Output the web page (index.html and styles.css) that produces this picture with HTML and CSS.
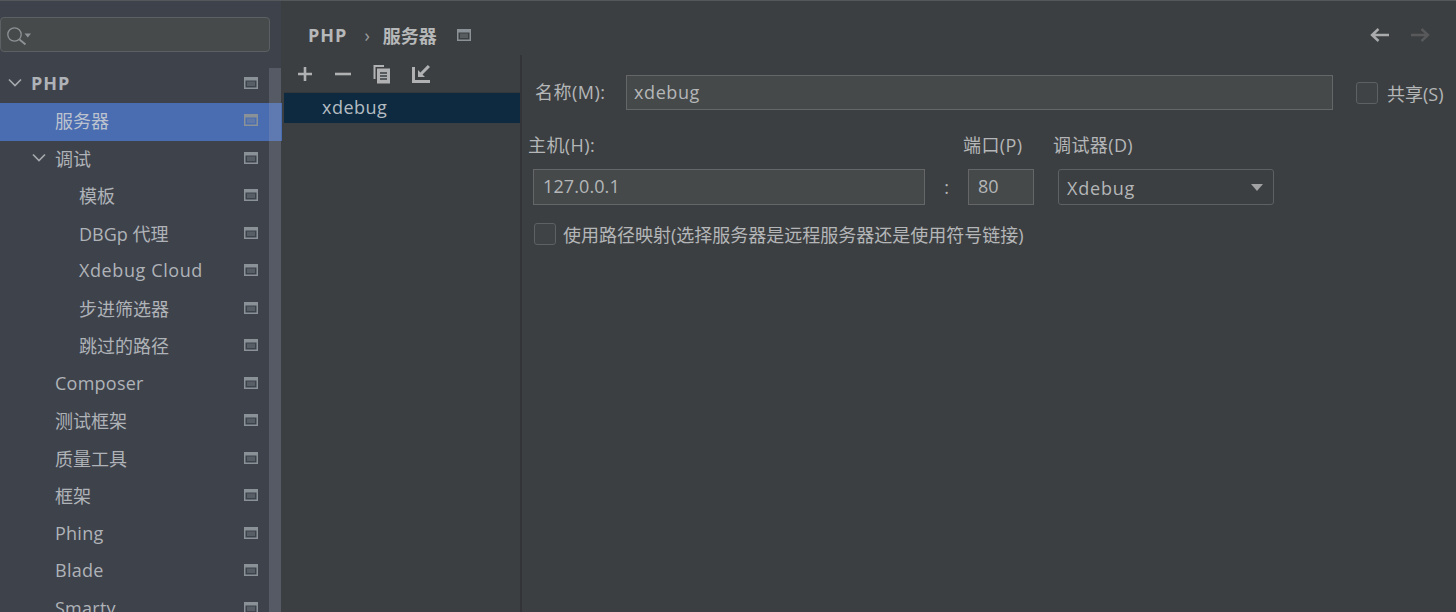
FILE: index.html
```html
<!DOCTYPE html>
<html lang="zh-CN">
<head>
    <meta charset="UTF-8">
    <title>PHP - 服务器</title>
    <link rel="stylesheet" href="styles.css">
</head>
<body>
    <svg class="defs" width="0" height="0">
        <symbol id="proj" viewBox="0 0 14 14">
            <rect x="0.75" y="1.75" width="12.5" height="10.5" fill="none" stroke="#8a9298" stroke-width="1.5"/>
            <rect x="1" y="2" width="12" height="2.5" fill="#8a9298"/>
            <rect x="3" y="5.5" width="8" height="4.5" fill="#8a9298" opacity="0.35"/>
        </symbol>
        <symbol id="chev" viewBox="0 0 15 14">
            <path d="M2 3.5 L8 9.5 L14 3.5" fill="none" stroke="#a4a8ac" stroke-width="1.7"/>
        </symbol>
    </svg>

    <div class="app">
        <!-- left tree -->
        <aside class="sidebar">
            <div class="search">
                <svg class="search-icon" width="32" height="24" viewBox="0 0 32 24">
                    <circle cx="13.5" cy="10.5" r="6.7" fill="none" stroke="#8f9295" stroke-width="1.3"/>
                    <path d="M18.5 15.5 L24.5 20.5" stroke="#8f9295" stroke-width="1.8"/>
                    <path d="M23.5 9.5 H30 L26.75 13.5 Z" fill="#8f9295"/>
                </svg>
            </div>
            <ul class="tree">
                <li class="row lvl0 root"><span class="tog"><svg width="15" height="14"><use href="#chev"/></svg></span><span class="name">PHP</span><svg class="pi" width="14" height="14"><use href="#proj"/></svg></li>
                <li class="row lvl1 selected"><span class="tog"></span><span class="name">服务器</span><svg class="pi" width="14" height="14"><use href="#proj"/></svg></li>
                <li class="row lvl1"><span class="tog"><svg width="15" height="14"><use href="#chev"/></svg></span><span class="name">调试</span><svg class="pi" width="14" height="14"><use href="#proj"/></svg></li>
                <li class="row lvl2"><span class="tog"></span><span class="name">模板</span><svg class="pi" width="14" height="14"><use href="#proj"/></svg></li>
                <li class="row lvl2"><span class="tog"></span><span class="name">DBGp 代理</span><svg class="pi" width="14" height="14"><use href="#proj"/></svg></li>
                <li class="row lvl2"><span class="tog"></span><span class="name wide">Xdebug Cloud</span><svg class="pi" width="14" height="14"><use href="#proj"/></svg></li>
                <li class="row lvl2"><span class="tog"></span><span class="name">步进筛选器</span><svg class="pi" width="14" height="14"><use href="#proj"/></svg></li>
                <li class="row lvl2"><span class="tog"></span><span class="name">跳过的路径</span><svg class="pi" width="14" height="14"><use href="#proj"/></svg></li>
                <li class="row lvl1"><span class="tog"></span><span class="name slim">Composer</span><svg class="pi" width="14" height="14"><use href="#proj"/></svg></li>
                <li class="row lvl1"><span class="tog"></span><span class="name">测试框架</span><svg class="pi" width="14" height="14"><use href="#proj"/></svg></li>
                <li class="row lvl1"><span class="tog"></span><span class="name">质量工具</span><svg class="pi" width="14" height="14"><use href="#proj"/></svg></li>
                <li class="row lvl1"><span class="tog"></span><span class="name">框架</span><svg class="pi" width="14" height="14"><use href="#proj"/></svg></li>
                <li class="row lvl1"><span class="tog"></span><span class="name slim">Phing</span><svg class="pi" width="14" height="14"><use href="#proj"/></svg></li>
                <li class="row lvl1"><span class="tog"></span><span class="name slim">Blade</span><svg class="pi" width="14" height="14"><use href="#proj"/></svg></li>
                <li class="row lvl1"><span class="tog"></span><span class="name slim">Smarty</span><svg class="pi" width="14" height="14"><use href="#proj"/></svg></li>
            </ul>
            <div class="scrollbar"></div>
        </aside>

        <main class="main">
            <header class="crumbs">
                <span class="crumb crumb-en">PHP</span>
                <span class="sep">›</span>
                <span class="crumb">服务器</span>
                <svg class="crumb-pi" width="14" height="14"><use href="#proj"/></svg>
                <span class="nav">
                    <svg width="22" height="16" viewBox="0 0 22 16"><path d="M20 8 H3 M9.5 2 L3 8 L9.5 14" fill="none" stroke="#a9abad" stroke-width="2.4"/></svg>
                    <svg width="22" height="16" viewBox="0 0 22 16"><path d="M2 8 H19 M12.5 2 L19 8 L12.5 14" fill="none" stroke="#58595b" stroke-width="2.4"/></svg>
                </span>
            </header>

            <div class="content">
                <section class="servers">
                    <div class="toolbar">
                        <svg width="18" height="18" viewBox="0 0 18 18"><path d="M9 2 V16 M2 9 H16" stroke="#afb1b3" stroke-width="2.6"/></svg>
                        <svg width="18" height="18" viewBox="0 0 18 18"><path d="M1 9 H17" stroke="#afb1b3" stroke-width="2.6"/></svg>
                        <svg width="20" height="20" viewBox="0 0 20 20"><path d="M1.5 1 H12 V3 H3.5 V15 H1.5 Z" fill="#afb1b3"/><rect x="5" y="4.5" width="13" height="15" fill="#afb1b3"/><path d="M8 9 H15 M8 12 H15 M8 15 H15" stroke="#3c3f41" stroke-width="1.4"/></svg>
                        <svg class="import" width="20" height="20" viewBox="0 0 20 20"><path d="M1 3 H4 V16 H19 V19 H1 Z" fill="#afb1b3"/><path d="M7 6 V13 H14 L11.5 10.6 L19 3 L16.8 1 L9.4 8.4 Z" fill="#afb1b3"/></svg>
                    </div>
                    <div class="server-item">xdebug</div>
                </section>

                <section class="form">
                    <div class="name-row">
                        <label class="name-label">名称(M):</label>
                        <div class="field name-field">xdebug</div>
                        <span class="check share-check"></span>
                        <span class="share-label">共享(S)</span>
                    </div>
                    <div class="head-row">
                        <span class="h-host">主机(H):</span>
                        <span class="h-port">端口(P)</span>
                        <span class="h-debug">调试器(D)</span>
                    </div>
                    <div class="value-row">
                        <div class="field host-field">127.0.0.1</div>
                        <span class="colon">:</span>
                        <div class="field port-field">80</div>
                        <div class="select">Xdebug<span class="caret"></span></div>
                    </div>
                    <div class="map-row">
                        <span class="check"></span>
                        <span>使用路径映射(选择服务器是远程服务器还是使用符号链接)</span>
                    </div>
                </section>
            </div>
        </main>
    </div>
</body>
</html>
```

FILE: styles.css
```css
html, body {
    margin: 0;
    height: 100%;
    overflow: hidden;
}
body {
    font-family: "Open Sans", "Noto Sans CJK SC", sans-serif;
    font-size: 18px;
    color: #b4b6b8;
    background-color: #3c3f41;
}
.defs {
    position: absolute;
}
.app {
    display: flex;
    height: 612px;
    border-top: 1px solid #55585a;
    box-sizing: border-box;
}

/* sidebar */
.sidebar {
    position: relative;
    width: 282px;
    flex: none;
    padding-top: 16px;
    box-sizing: border-box;
    overflow: hidden;
    background: linear-gradient(to right, #3e424b 281px, #3c3f41 281px);
}
.search {
    height: 35px;
    width: 270px;
    box-sizing: border-box;
    margin-bottom: 13.5px;
    padding-left: 3px;
    display: flex;
    align-items: center;
    background-color: #464a4b;
    border: 1.5px solid #5c6062;
    border-radius: 4px;
}
.search-icon {
    margin-left: -3px;
    margin-top: 2px;
}
.tree {
    list-style: none;
    margin: 0;
    padding: 0;
}
.row {
    display: flex;
    align-items: center;
    box-sizing: border-box;
    height: 37.5px;
    padding-right: 24px;
    padding-bottom: 3px;
    color: #afb3b8;
}
.lvl0 { padding-left: 7px; }
.lvl1 { padding-left: 31px; }
.lvl2 { padding-left: 55px; }
.tog {
    width: 24px;
    flex: none;
    display: flex;
    align-items: center;
}
.name {
    flex: 1;
    white-space: nowrap;
}
.wide {
    letter-spacing: 0.6px;
}
.slim {
    letter-spacing: 0.25px;
}
.root .name {
    font-weight: 700;
    letter-spacing: 1px;
}
.selected {
    background-color: #4a6cb0;
    color: #bcc3cf;
}
.pi {
    flex: none;
}
.scrollbar {
    position: absolute;
    left: 269px;
    top: 67px;
    bottom: 0;
    width: 12px;
    background-color: rgba(160, 165, 175, 0.25);
}

/* main */
.main {
    flex: 1;
    display: flex;
    flex-direction: column;
    min-width: 0;
}
.crumbs {
    display: flex;
    align-items: center;
    height: 54px;
    padding: 13px 25px 0 26px;
    box-sizing: border-box;
    color: #b6b8ba;
}
.crumb {
    font-weight: 700;
}
.crumb-en {
    letter-spacing: 1px;
}
.sep {
    margin: 0 13px 0 17px;
    color: #9a9c9e;
}
.crumb-pi {
    margin-left: 20px;
}
.nav {
    margin-left: auto;
    display: flex;
    gap: 18px;
}
.content {
    flex: 1;
    display: flex;
}
.servers {
    width: 236px;
    flex: none;
    margin-left: 2px;
    border-right: 2px solid #323437;
}
.toolbar {
    display: flex;
    align-items: center;
    gap: 20px;
    height: 37px;
    padding-left: 12px;
    border-bottom: 1px solid #35383a;
}
.import {
    margin-left: -1px;
}
.server-item {
    height: 30px;
    line-height: 28px;
    padding-left: 38px;
    background-color: #0d2a40;
    color: #b4bcc2;
    letter-spacing: 0.5px;
}

/* form */
.form {
    flex: 1;
    padding: 20px 0 0 13px;
    min-width: 0;
}
.name-row {
    display: flex;
    align-items: center;
    height: 35px;
}
.name-label {
    width: 91px;
    padding-bottom: 3px;
    letter-spacing: 0.5px;
}
.field {
    box-sizing: border-box;
    background-color: #45494a;
    border: 1.5px solid #646667;
    padding-left: 9px;
    height: 36px;
    line-height: 33px;
    color: #b4b6b8;
}
.name-field {
    width: 707px;
    height: 35px;
    padding-left: 7px;
    letter-spacing: 0.6px;
}
.check {
    display: block;
    width: 22px;
    height: 22px;
    box-sizing: border-box;
    background-color: #3f4345;
    border: 1.5px solid #5e6163;
    border-radius: 3px;
}
.share-check {
    margin-left: 23px;
}
.share-label {
    margin-left: 9px;
}
.head-row {
    display: flex;
    margin: 22px 0 0 -7px;
    height: 27px;
    line-height: 27px;
    letter-spacing: 0.4px;
}
.h-host { width: 435px; }
.h-port { width: 90px; }
.value-row {
    display: flex;
    align-items: center;
    margin: 10px 0 0 -2px;
}
.host-field {
    width: 392px;
    letter-spacing: 0.1px;
}
.colon {
    width: 43px;
    text-align: center;
}
.port-field {
    width: 66px;
}
.select {
    box-sizing: border-box;
    width: 216px;
    height: 36px;
    line-height: 36px;
    margin-left: 24px;
    padding-left: 8px;
    position: relative;
    border: 1.5px solid #5e6163;
    border-radius: 3px;
    background-color: #3c3f41;
    letter-spacing: 0.8px;
}
.caret {
    position: absolute;
    right: 10px;
    top: 14px;
    border-left: 6.5px solid transparent;
    border-right: 6.5px solid transparent;
    border-top: 7px solid #a0a2a4;
}
.map-row {
    display: flex;
    align-items: center;
    gap: 7px;
    margin: 16px 0 0 -1px;
}
```
